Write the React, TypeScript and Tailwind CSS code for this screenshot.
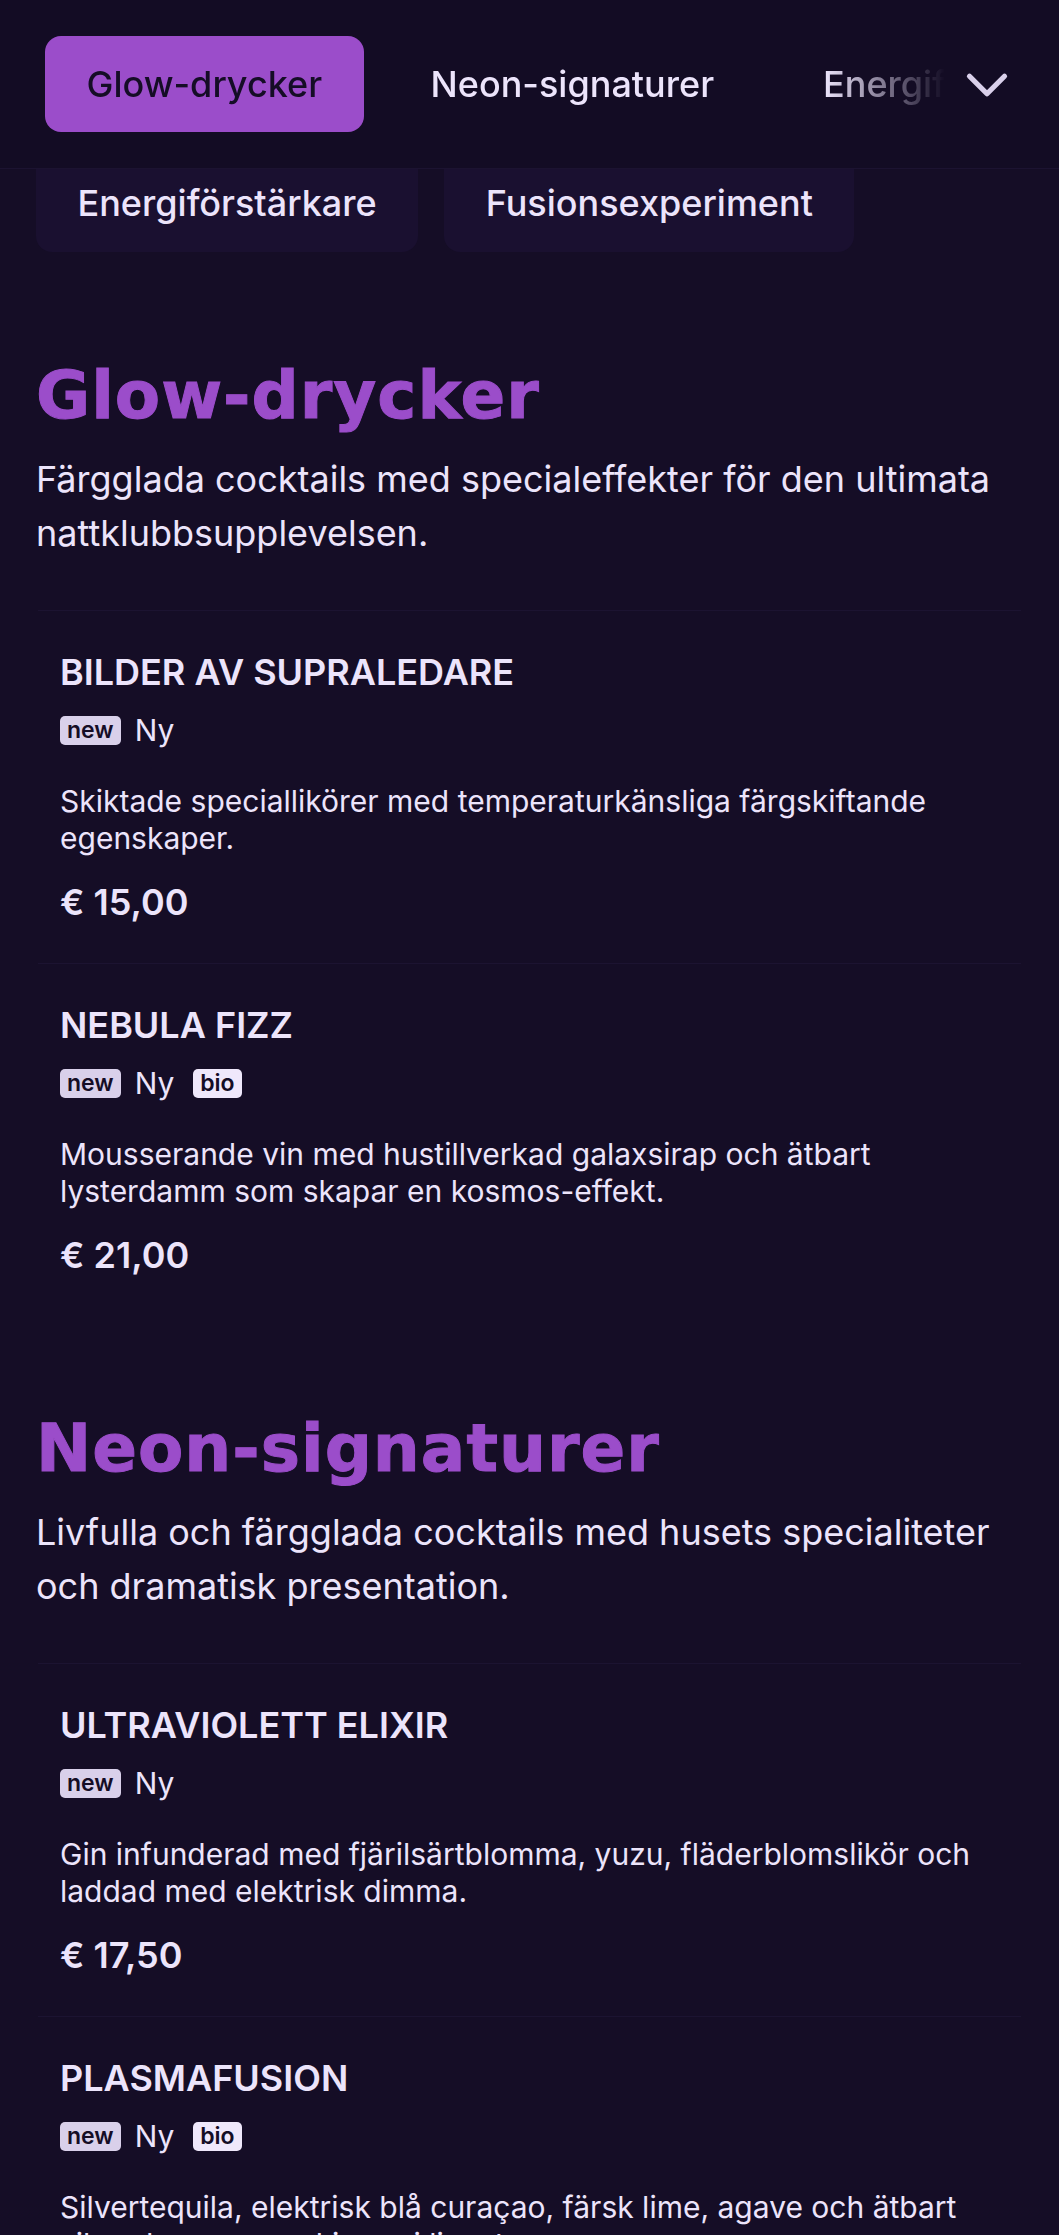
import React from 'react';
import { ChevronDown } from 'lucide-react';

const Tag = ({ children, light }: { children: React.ReactNode; light?: boolean }) => (
  <span className={`inline-flex h-[29px] items-center rounded-[5px] px-[7px] text-[23px] font-semibold leading-none text-[#150d26] ${light ? 'bg-[#efe8fb]' : 'bg-[#d9d0ea]'}`}>
    {children}
  </span>
);

const items = {
  glow: [
    {
      name: 'BILDER AV SUPRALEDARE',
      desc: 'Skiktade speciallikörer med temperaturkänsliga färgskiftande egenskaper.',
      price: '€ 15,00',
      bio: false,
    },
    {
      name: 'NEBULA FIZZ',
      desc: 'Mousserande vin med hustillverkad galaxsirap och ätbart lysterdamm som skapar en kosmos-effekt.',
      price: '€ 21,00',
      bio: true,
    },
  ],
  neon: [
    {
      name: 'ULTRAVIOLETT ELIXIR',
      desc: 'Gin infunderad med fjärilsärtblomma, yuzu, fläderblomslikör och laddad med elektrisk dimma.',
      price: '€ 17,50',
      bio: false,
    },
    {
      name: 'PLASMAFUSION',
      desc: 'Silvertequila, elektrisk blå curaçao, färsk lime, agave och ätbart silverdamm som skimrar i ljuset av neon.',
      price: '€ 19,00',
      bio: true,
    },
  ],
};

const MenuItem = ({ item }: { item: (typeof items.glow)[number] }) => (
  <div className="mx-[2px] border-t border-[#1c1331] px-[22px] pt-[34px] pb-[34px]">
    <h3 className="text-[36px] font-semibold leading-[54px] text-[#ece4fb]">{item.name}</h3>
    <div className="mt-[13px] flex h-[36px] items-center text-[30px] text-[#ece4fb]">
      <Tag>new</Tag>
      <span className="ml-[14px]">Ny</span>
      {item.bio && (
        <span className="ml-[19px] flex">
          <Tag light>bio</Tag>
        </span>
      )}
    </div>
    <p className="mt-[35px] text-[30px] leading-[36.5px] text-[#ece4fb]">{item.desc}</p>
    <p className="mt-[19px] text-[36px] font-semibold leading-[54px] text-[#ece4fb]">{item.price}</p>
  </div>
);

const Section = ({ title, text, list, top }: { title: string; text: string; list: (typeof items.glow); top: string }) => (
  <section className={top}>
    <h2 className="font-['DejaVu_Sans'] text-[66px] font-bold leading-[80px] tracking-[1px] text-[#9b4dca] [-webkit-text-stroke:1px_#9b4dca]">{title}</h2>
    <p className="mt-[16px] text-[36px] leading-[54px] text-[#ece4fb]">{text}</p>
    <div className="mt-[50px]">
      {list.map((item) => (
        <MenuItem key={item.name} item={item} />
      ))}
    </div>
  </section>
);

export default function App() {
  return (
    <div className="h-[2235px] overflow-hidden bg-[#150d26] font-['Inter',sans-serif]">
      <header className="flex h-[169px] items-start border-b border-[#1c1331] bg-[#130c24] pt-[36px]">
        <nav className="flex w-[945px] overflow-hidden pl-[45px] [mask-image:linear-gradient(to_right,black_825px,transparent_945px)]">
          <a className="flex h-[96px] shrink-0 items-center rounded-[16px] bg-[#9b4dca] px-[41.5px] text-[36px] font-medium text-[#150d26]">Glow-drycker</a>
          <a className="flex h-[96px] shrink-0 items-center px-[67px] text-[36px] font-medium text-[#ece4fb]">Neon-signaturer</a>
          <a className="flex h-[96px] shrink-0 items-center pl-[42px] text-[36px] font-medium text-[#ece4fb]">Energiförstärkare</a>
        </nav>
        <ChevronDown className="ml-[7px] mt-[14px] h-[70px] w-[70px] text-[#d9d0ea]" strokeWidth={1.8} />
      </header>
      <div className="flex gap-[26px] px-[36px]">
        <a className="flex h-[83px] items-center rounded-b-[16px] bg-[#1a1030] px-[41.5px] pb-[16px] text-[36px] font-medium text-[#ece4fb]">Energiförstärkare</a>
        <a className="flex h-[83px] items-center rounded-b-[16px] bg-[#1a1030] px-[41.5px] pb-[16px] text-[36px] font-medium text-[#ece4fb]">Fusionsexperiment</a>
      </div>
      <main className="px-[36px]">
        <Section
          top="mt-[104px]"
          title="Glow-drycker"
          text="Färgglada cocktails med specialeffekter för den ultimata nattklubbsupplevelsen."
          list={items.glow}
        />
        <Section
          top="mt-[93px]"
          title="Neon-signaturer"
          text="Livfulla och färgglada cocktails med husets specialiteter och dramatisk presentation."
          list={items.neon}
        />
      </main>
    </div>
  );
}
